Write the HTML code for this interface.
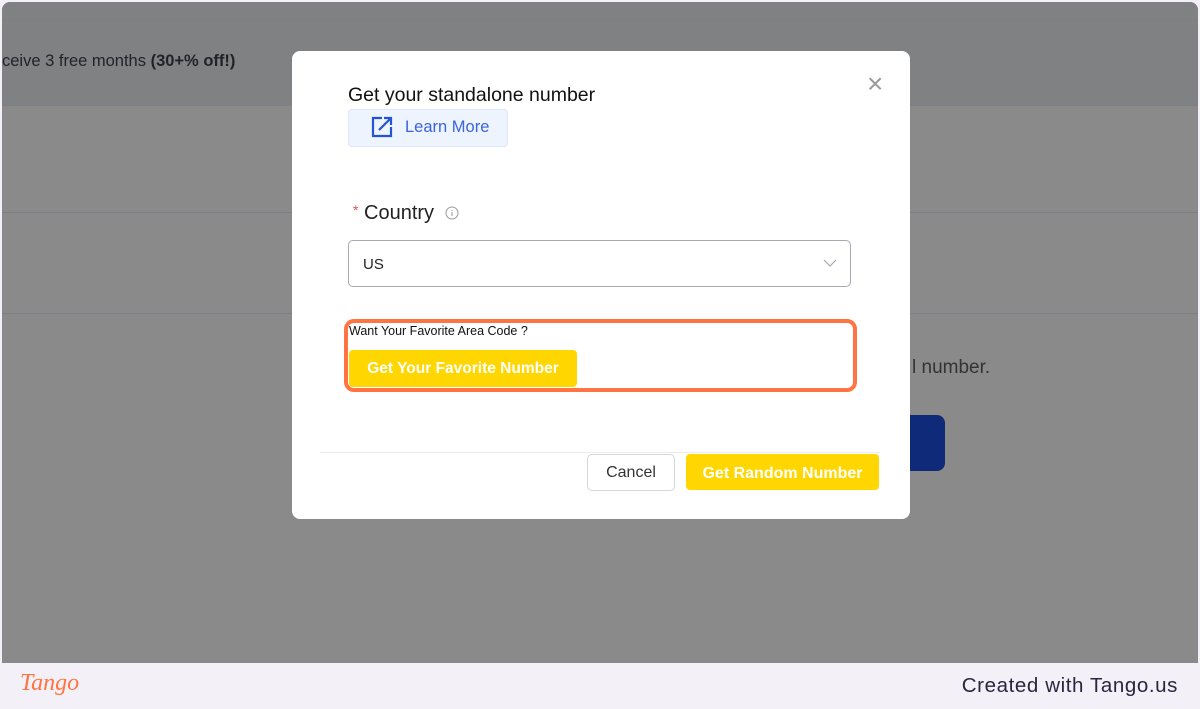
<!DOCTYPE html>
<html><head><style>
*{margin:0;padding:0;box-sizing:border-box}
body{width:1200px;height:709px;overflow:hidden;background:#f3f1f7;font-family:"Liberation Sans",sans-serif;position:relative}
.bg{position:absolute;left:2px;top:2px;width:1196px;height:661px;background:#8a8a8a;border-radius:8px 8px 0 0;overflow:hidden}
.line{position:absolute;left:0;right:0;height:1px;background:#7b7f88}
.abs{position:absolute}
.modal{position:absolute;left:292px;top:51px;width:618px;height:468px;background:#fff;border-radius:8px}
</style></head><body>
<div class="bg">
  <div class="abs" style="left:0;top:0;right:0;height:103px;background:#7f8183"></div>
  <div class="line" style="top:18px"></div>
  <div class="line" style="top:103px"></div>
  <div class="line" style="top:210px"></div>
  <div class="line" style="top:311px"></div>
  <div class="abs" style="left:0;top:50px;font-size:16.5px;color:#1f2329">ceive 3 free months <b>(30+% off!)</b></div>
  <div class="abs" style="left:895px;top:242px;font-size:32px;font-weight:bold;color:#111">r</div>
  <div class="abs" style="left:910px;top:355px;font-size:19px;color:#333">l number.</div>
  <div class="abs" style="left:880px;top:413px;width:63px;height:56px;background:#0e2a78;border-radius:8px"></div>
</div>
<div class="modal">
  <div class="abs" style="left:56px;top:33px;font-size:19.5px;color:#111">Get your standalone number</div>
  <div class="abs" style="left:575px;top:17px;font-size:28px;color:#999;font-weight:300">×</div>
  <div class="abs" style="left:56px;top:58px;width:160px;height:38px;background:#eef4fe;border:1px solid #dde8fb;border-radius:4px"></div>
  <svg class="abs" style="left:78px;top:64px" width="24" height="24" viewBox="0 0 24 24" fill="none" stroke="#2453d6" stroke-width="2.2"><path d="M12 3H3v18h18v-9"/><path d="M9 15L20 4M14 3h7v7"/></svg>
  <div class="abs" style="left:113px;top:67px;font-size:16.5px;color:#3a63e0">Learn More</div>
  <div class="abs" style="left:61px;top:151px;font-size:20px;color:#222"><span style="color:#e34d59;font-size:14px;vertical-align:top">*</span> Country</div>
  <svg class="abs" style="left:153px;top:155px" width="14" height="14" viewBox="0 0 14 14" fill="none" stroke="#999" stroke-width="1"><circle cx="7" cy="7" r="6"/><path d="M7 6v4M7 4v1"/></svg>
  <div class="abs" style="left:56px;top:189px;width:503px;height:47px;border:1px solid #a9a9b3;border-radius:5px"></div>
  <div class="abs" style="left:71px;top:205px;font-size:15px;color:#222">US</div>
  <svg class="abs" style="left:531px;top:207px" width="14" height="10" viewBox="0 0 14 10" fill="none" stroke="#aaa" stroke-width="1.2"><path d="M1 2l6 6 6-6"/></svg>
  <div class="abs" style="left:52px;top:268px;width:513px;height:73px;border:4px solid #ff7442;border-radius:10px"></div>
  <div class="abs" style="left:57px;top:273px;font-size:12.5px;color:#111">Want Your Favorite Area Code ?</div>
  <div class="abs" style="left:57px;top:299px;width:228px;height:37px;background:#ffd600;border-radius:4px;color:#fff;font-size:15.5px;font-weight:bold;text-align:center;line-height:38px">Get Your Favorite Number</div>
  <div class="abs" style="left:28px;top:401px;width:560px;height:1px;background:#ebebeb"></div>
  <div class="abs" style="left:295px;top:403px;width:88px;height:37px;border:1px solid #d6d6d6;border-radius:5px;font-size:16px;color:#333;text-align:center;line-height:36px">Cancel</div>
  <div class="abs" style="left:394px;top:403px;width:193px;height:36px;background:#ffd600;border-radius:4px;color:#fff;font-size:16px;font-weight:bold;text-align:center;line-height:40px">Get Random Number</div>
</div>
<div class="abs" style="left:20px;top:670px;font-size:24px;color:#ff7442;font-family:'Liberation Serif',serif;font-style:italic">Tango</div>
<div class="abs" style="right:22px;top:674px;font-size:20.5px;color:#2b2540;letter-spacing:0.6px">Created with Tango.us</div>
</body></html>
